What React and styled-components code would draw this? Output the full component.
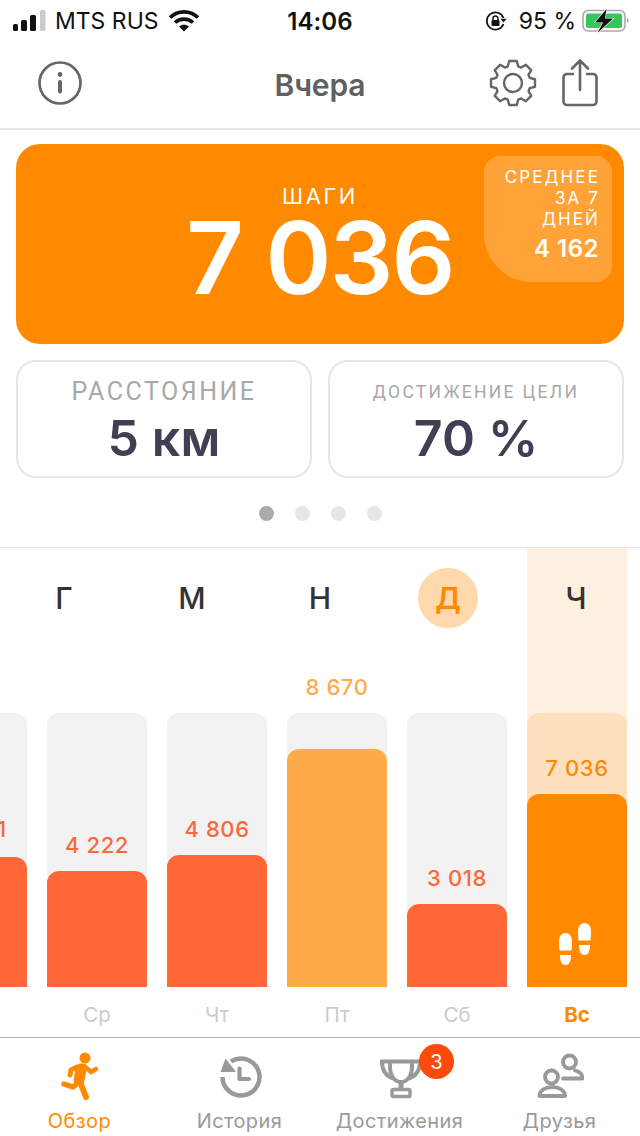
import React from "react";
import styled, { createGlobalStyle } from "styled-components";

const Global = createGlobalStyle`
  html, body { margin: 0; padding: 0; background: #fff; }
  body { font-family: Inter, "Noto Sans", sans-serif; }
`;

const Page = styled.div`
  width: 640px; height: 1136px; overflow: hidden; display: flex; flex-direction: column; background: #fff;
`;
const StatusBar = styled.div`
  height: 40px; display: grid; grid-template-columns: 1fr auto 1fr; align-items: center;
  padding: 2px 11px 0 13px; box-sizing: border-box; font-size: 23px; color: #111;
`;
const StatusLeft = styled.div`display: flex; align-items: center; gap: 7px;`;
const Carrier = styled.span`margin-left: -1px;`;
const StatusRight = styled.div`display: flex; align-items: center; justify-content: flex-end; gap: 6px;`;
const LockWrap = styled.div`display: flex; margin-right: 6px;`;
const Clock = styled.div`font-weight: 600; font-size: 24px; letter-spacing: 0.1px; margin-left: -2px;`;

const NavBar = styled.div`
  height: 90px; box-sizing: border-box; border-bottom: 2px solid #e6e6e6; display: flex; align-items: center;
  justify-content: space-between; padding: 0 42px 2px 37px; color: #666;
`;
const NavTitle = styled.div`
  position: absolute; left: 0; right: 0; margin-top: 3px; text-align: center; font-size: 30px; font-weight: 600; color: #5f6064; letter-spacing: -0.15px; pointer-events: none;
`;
const NavRight = styled.div`display: flex; align-items: center; gap: 25px;`;

const Hero = styled.div`
  margin: 14px 16px 0; height: 200px; border-radius: 24px; background: #ff8a00; color: #fff; position: relative;
  display: flex; flex-direction: column; align-items: center; padding-top: 38px; box-sizing: border-box;
`;
const HeroLabel = styled.div`font-size: 22px; letter-spacing: 2.6px; line-height: 28px; font-weight: 400;`;
const HeroValue = styled.div`font-size: 100px; font-weight: 600; line-height: 96px; letter-spacing: -1.8px;`;
const AvgBox = styled.div`
  position: absolute; top: 12px; right: 12px; width: 128px; height: 126px; box-sizing: border-box;
  background: rgba(255,255,255,0.22); border-radius: 16px 16px 16px 48px; text-align: right; padding: 11px 12px 0 0;
`;
const AvgLabel = styled.div`font-size: 17px; line-height: 21px; letter-spacing: 2.1px; font-weight: 400;`;
const AvgValue = styled.div`font-size: 24px; font-weight: 600; line-height: 28px; margin-top: 5px; letter-spacing: 0.5px; margin-right: 1px;`;

const Cards = styled.div`display: flex; gap: 16px; margin: 16px 16px 0;`;
const Card = styled.div`
  flex: 1; height: 118px; box-sizing: border-box; border: 2px solid #e6e6e6; border-radius: 20px;
  display: flex; flex-direction: column; align-items: center; padding-top: 15px;
`;
const CardLabel = styled.div`
  font-family: Roboto, sans-serif; color: #a8a8a8; height: 30px; line-height: 30px; white-space: nowrap;
  font-size: ${p => p.$small ? "17.5px" : "25px"}; letter-spacing: ${p => p.$small ? "2.3px" : "2.5px"};
`;
const CardValue = styled.div`
  color: #3f4054; font-size: 50px; font-weight: 600; line-height: 60px; margin-top: 1px; letter-spacing: 0.2px;
`;
const Dots = styled.div`display: flex; justify-content: center; gap: 21px; margin-top: 28px; height: 16px;`;
const Dot = styled.div`width: 15px; height: 15px; border-radius: 50%; background: ${p => p.$on ? "#aaa" : "#e6e6e6"};`;

const ChartArea = styled.div`
  margin-top: 25px; flex: 1; position: relative; border-top: 1px solid #e4e4e4; overflow: hidden;
`;
const Highlight = styled.div`
  position: absolute; left: 527px; width: 100px; top: 0; bottom: 50px; background: #fff0e0;
`;
const Letters = styled.div`
  position: relative; display: grid; grid-template-columns: repeat(5, 128px); height: 100px; padding-top: 20px; box-sizing: border-box;
`;
const Letter = styled.div`
  width: 60px; height: 60px; border-radius: 50%; justify-self: center; display: flex; align-items: center; justify-content: center;
  font-size: 30px; font-weight: ${p => p.$on ? 600 : 500}; color: ${p => p.$on ? "#ff8a00" : "#333"};
  background: ${p => p.$on ? "#ffd9ab" : "transparent"};
`;
const Columns = styled.div`position: relative; display: flex; gap: 20px; margin: 65px 0 0 -73px;`;
const Col = styled.div`width: 100px; flex: none; display: flex; flex-direction: column; align-items: center;`;
const Track = styled.div`
  width: 100%; height: 274px; position: relative; background: ${p => p.$hi ? "#fee0bf" : "#f2f2f2"};
  border-radius: 12px 12px 0 0; display: flex; flex-direction: column; justify-content: flex-end;
`;
const Bar = styled.div`
  position: relative; width: 100%; height: ${p => p.$h}px; background: ${p => p.$color}; border-radius: 12px 12px 0 0;
`;
const BarValue = styled.div`
  position: absolute; left: -20px; right: -20px; text-align: center; top: ${p => p.$top}px; line-height: 28px;
  font-size: 22px; font-weight: 500; color: ${p => p.$color}; letter-spacing: 0.6px; white-space: nowrap;
`;
const Feet = styled.svg`position: absolute; left: 32px; bottom: 22px;`;
const DayLabel = styled.div`
  margin-top: 14px; line-height: 28px; font-size: 20.5px; color: ${p => p.$on ? "#ff8a00" : "#ccc"}; font-weight: ${p => p.$on ? 700 : 400};
`;

const TabBar = styled.div`
  height: 99px; flex: none; border-top: 1px solid #b8b8b8; padding-top: 1px; box-sizing: border-box; display: grid; grid-template-columns: repeat(4, 160px);
`;
const Tab = styled.div`
  display: flex; flex-direction: column; align-items: center; color: ${p => p.$on ? "#ff8a00" : "#999"}; position: relative;
`;
const TabIcon = styled.svg`display: block; margin-top: 10px; flex: none;`;
const TabLabel = styled.div`font-size: 20px; line-height: 26px; margin-top: 3px; letter-spacing: 0.42px; white-space: nowrap; margin-left: -1px;`;
const Badge = styled.div`
  position: absolute; left: 99px; top: 5px; width: 35px; height: 35px; border-radius: 50%; background: #ff4a0a; color: #fff;
  display: flex; align-items: center; justify-content: center; font-size: 20px;
`;
const WifiSvg = styled.svg`margin-left: 2px;`;

const Signal = () => (
  <svg width="36" height="24" viewBox="0 0 36 24">
    <rect x="0" y="15" width="5" height="7" rx="1.5" fill="#111" />
    <rect x="8" y="11" width="6" height="11" rx="1.5" fill="#111" />
    <rect x="17" y="6" width="6" height="16" rx="1.5" fill="#111" />
    <rect x="27" y="1" width="5.500" height="21" rx="1.5" fill="#ccc" />
  </svg>
);
const Wifi = () => (
  <WifiSvg width="32" height="24" viewBox="0 0 32 24">
    <path d="M2 8.5C10 1 22 1 30 8.5" fill="none" stroke="#111" strokeWidth="3.6" />
    <path d="M7 13.5C12 9 20 9 25 13.5" fill="none" stroke="#111" strokeWidth="3.6" />
    <path d="M11 17.5C14 15 18 15 21 17.5L16 22.5Z" fill="#111" />
  </WifiSvg>
);
const RotLock = () => (
  <svg width="22" height="22" viewBox="0 0 22 22">
    <path d="M18.5 8A8.6 8.6 0 1 0 18.5 14" fill="none" stroke="#111" strokeWidth="1.8" />
    <path d="M15.5 10.2h6l-3-3.6z" fill="#111" transform="rotate(180 18.5 9.5)" />
    <rect x="6.5" y="10" width="8" height="6" rx="1" fill="#111" />
    <path d="M8 10V8.500a2.500 2.500 0 0 1 5 0V10" fill="none" stroke="#111" strokeWidth="1.5" />
  </svg>
);
const Battery = () => (
  <svg width="47" height="24" viewBox="0 0 47 24">
    <rect x="1" y="1.500" width="42" height="20.500" rx="5" fill="none" stroke="#a9a9a9" strokeWidth="1.6" />
    <rect x="4" y="4.500" width="36" height="14.500" rx="2.500" fill="#34c759" />
    <path d="M45 8.500c2 .6 2 5 0 5.500z" fill="#a9a9a9" />
    <path d="M24.500 0L13 13.500h8L15.500 24 31 9.500h-8z" fill="#111" stroke="#fff" strokeWidth="1.200" paintOrder="stroke" />
  </svg>
);
const InfoIcon = () => (
  <svg width="46" height="46" viewBox="0 0 46 46">
    <circle cx="23" cy="23" r="20.5" fill="none" stroke="#666" strokeWidth="2.7" />
    <circle cx="23" cy="14.500" r="2.400" fill="#666" />
    <rect x="21" y="20" width="4" height="13.500" rx="2" fill="#666" />
  </svg>
);
const GearIcon = () => {
  const cx = 24, cy = 24, teeth = 8;
  const pts = [];
  for (let i = 0; i < teeth; i++) {
    const a = (i * 2 * Math.PI) / teeth - Math.PI / 2;
    const at = (r, d) => [cx + r * Math.cos(a + d), cy + r * Math.sin(a + d)].map(n => n.toFixed(2)).join(" ");
    pts.push(at(17.5, -0.3), at(22.3, -0.17), at(22.3, 0.17), at(17.5, 0.3));
  }
  return (
    <svg width="48" height="48" viewBox="0 0 48 48">
      <path d={`M${pts.join("L")}Z`} fill="none" stroke="#666" strokeWidth="2.4" strokeLinejoin="round" />
      <circle cx={cx} cy={cy} r="9" fill="none" stroke="#666" strokeWidth="2.4" />
    </svg>
  );
};
const ShareIcon = () => (
  <svg width="36" height="48" viewBox="0 0 36 48">
    <path d="M11 15H5a3.500 3.500 0 0 0-3.500 3.500v24A3.500 3.500 0 0 0 5 46h26a3.500 3.500 0 0 0 3.500-3.500v-24A3.500 3.500 0 0 0 31 15h-6" fill="none" stroke="#666" strokeWidth="2.6" strokeLinecap="round" />
    <path d="M18 31V2M10 9.500L18 1.500 26 9.500" fill="none" stroke="#666" strokeWidth="2.600" strokeLinecap="round" strokeLinejoin="round" />
  </svg>
);

const RunnerIcon = () => (
  <TabIcon width="48" height="56" viewBox="0 0 48 56">
    <circle cx="29" cy="9" r="5.500" fill="currentColor" />
    <g fill="none" stroke="currentColor" strokeLinecap="round" strokeLinejoin="round">
      <path d="M25 20L23 31" strokeWidth="11" />
      <path d="M24 33L30 48" strokeWidth="6" />
      <path d="M23 33L17 38L8 35" strokeWidth="5.500" />
      <path d="M21 18L15 21L14 26" strokeWidth="5" />
      <path d="M28 17L35 23L40 20" strokeWidth="4.500" />
    </g>
  </TabIcon>
);
const HistoryIcon = () => (
  <TabIcon width="48" height="56" viewBox="0 0 48 56">
    <path d="M15 12.400A18.500 18.500 0 1 1 6.500 28" fill="none" stroke="currentColor" strokeWidth="4.500" />
    <path d="M4.500 23L9.500 9.500L20 23z" fill="currentColor" />
    <path d="M23.500 19.500V30H33" fill="none" stroke="currentColor" strokeWidth="4.200" strokeLinecap="round" strokeLinejoin="round" />
  </TabIcon>
);
const TrophyIcon = () => (
  <TabIcon width="48" height="56" viewBox="0 0 48 56">
    <path d="M14 12.500H36V18C36 27 31 33 25 33C19 33 14 27 14 18Z" fill="none" stroke="currentColor" strokeWidth="4" strokeLinejoin="round" />
    <path d="M14 12.500H6C6 21 10 27 17 29.500M36 12.500H44C44 21 40 27 33 29.500" fill="none" stroke="currentColor" strokeWidth="4" />
    <path d="M25 33V41" stroke="currentColor" strokeWidth="5" />
    <rect x="16" y="40.500" width="18" height="7" rx="1.500" fill="none" stroke="currentColor" strokeWidth="3.400" />
  </TabIcon>
);
const FriendsIcon = () => (
  <TabIcon width="48" height="56" viewBox="0 0 48 56">
    <g fill="none" stroke="currentColor" strokeWidth="3.800" strokeLinecap="round" strokeLinejoin="round">
      <circle cx="15.500" cy="28" r="6.500" />
      <path d="M3.500 47C3.500 35 29 35 29 47Z" />
      <circle cx="33.500" cy="13" r="6.500" />
      <path d="M27 29.500H46.500C46.500 25 43 22.500 39 21.500" />
    </g>
  </TabIcon>
);

const days = [
  { value: "5 041", h: 130, color: "#ff6737", label: "", top: -42 },
  { value: "4 222", h: 116, color: "#ff6737", label: "Ср" },
  { value: "4 806", h: 132, color: "#ff6737", label: "Чт" },
  { value: "8 670", h: 238, color: "#ffab4a", label: "Пт", top: -76, vcolor: "#ffab4a" },
  { value: "3 018", h: 83, color: "#ff6737", label: "Сб" },
  { value: "7 036", h: 193, color: "#ff8a00", label: "Вс", on: true, vcolor: "#ff8a00" },
];

export default function App() {
  return (
    <Page>
      <Global />
      <StatusBar>
        <StatusLeft><Signal /><Carrier>MTS RUS</Carrier><Wifi /></StatusLeft>
        <Clock>14:06</Clock>
        <StatusRight><LockWrap><RotLock /></LockWrap><span>95 %</span><Battery /></StatusRight>
      </StatusBar>
      <NavBar>
        <InfoIcon />
        <NavTitle>Вчера</NavTitle>
        <NavRight>
          <GearIcon />
          <ShareIcon />
        </NavRight>
      </NavBar>
      <Hero>
        <HeroLabel>ШАГИ</HeroLabel>
        <HeroValue>7 036</HeroValue>
        <AvgBox>
          <AvgLabel>СРЕДНЕЕ<br />ЗА 7<br />ДНЕЙ</AvgLabel>
          <AvgValue>4 162</AvgValue>
        </AvgBox>
      </Hero>
      <Cards>
        <Card><CardLabel>РАССТОЯНИЕ</CardLabel><CardValue>5 км</CardValue></Card>
        <Card><CardLabel $small>ДОСТИЖЕНИЕ ЦЕЛИ</CardLabel><CardValue>70 %</CardValue></Card>
      </Cards>
      <Dots><Dot $on /><Dot /><Dot /><Dot /></Dots>
      <ChartArea>
        <Highlight />
        <Letters>
          {["Г", "М", "Н", "Д", "Ч"].map((l, i) => <Letter key={l} $on={i === 3}>{l}</Letter>)}
        </Letters>
        <Columns>
          {days.map(d => (
            <Col key={d.value}>
              <Track $hi={d.on}>
                <Bar $h={d.h} $color={d.color}>
                  <BarValue $top={d.top ?? -40} $color={d.vcolor ?? "#ff6737"}>{d.value}</BarValue>
                  {d.on && (
                    <Feet width="32" height="42" viewBox="0 0 32 42" fill="#fff">
                      <path d="M6.500 10C10.500 10 13 13.500 13 18.500C13 22 12.700 25.500 12.400 27.500H.6C.3 25.500 0 22 0 18.500C0 13.500 2.500 10 6.500 10Z" />
                      <path d="M1 32H12C12 38 10.500 42 6.500 42C2.500 42 1 38 1 32Z" />
                      <path d="M25.500 0C29.500 0 32 3.500 32 8.500C32 12 31.700 15.500 31.400 17.500H19.600C19.300 15.500 19 12 19 8.500C19 3.500 21.500 0 25.500 0Z" />
                      <path d="M20 22H31C31 28 29.500 32 25.500 32C21.500 32 20 28 20 22Z" />
                    </Feet>
                  )}
                </Bar>
              </Track>
              <DayLabel $on={d.on}>{d.label}</DayLabel>
            </Col>
          ))}
        </Columns>
      </ChartArea>
      <TabBar>
        <Tab $on><RunnerIcon /><TabLabel>Обзор</TabLabel></Tab>
        <Tab><HistoryIcon /><TabLabel>История</TabLabel></Tab>
        <Tab><TrophyIcon /><Badge>3</Badge><TabLabel>Достижения</TabLabel></Tab>
        <Tab><FriendsIcon /><TabLabel>Друзья</TabLabel></Tab>
      </TabBar>
    </Page>
  );
}
